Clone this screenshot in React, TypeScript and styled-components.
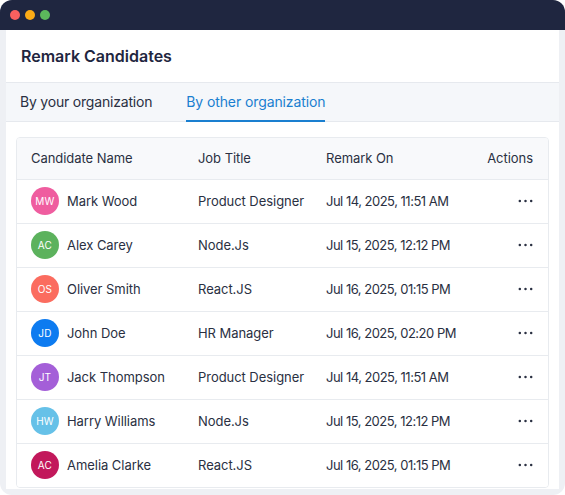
import React from 'react';
import styled, { createGlobalStyle } from 'styled-components';

const GlobalStyle = createGlobalStyle`
  html, body {
    margin: 0;
    padding: 0;
    background: #fff;
    font-family: Inter, "Liberation Sans", sans-serif;
  }
`;

const Frame = styled.div`
  width: 565px;
  height: 495px;
  box-sizing: border-box;
  display: flex;
  flex-direction: column;
  background: #eef0f4;
  border-radius: 12px;
  overflow: hidden;
`;

const TitleBar = styled.div`
  height: 30px;
  flex: none;
  display: flex;
  align-items: center;
  gap: 5px;
  padding-left: 10px;
  background: #1f2640;
`;

const Dot = styled.span<{ $color: string }>`
  width: 10px;
  height: 10px;
  border-radius: 50%;
  background: ${p => p.$color};
`;

const Panel = styled.div`
  height: 459px;
  margin: 0 6px;
  background: #fff;
  display: flex;
  flex-direction: column;
  overflow: hidden;
`;

const Title = styled.h1`
  margin: 0;
  height: 52px;
  flex: none;
  box-sizing: border-box;
  padding-left: 15px;
  display: flex;
  align-items: center;
  font-size: 16px;
  font-weight: 600;
  color: #1f2640;
`;

const Tabs = styled.div`
  height: 40px;
  flex: none;
  box-sizing: border-box;
  display: flex;
  gap: 34px;
  padding-left: 14px;
  background: #f5f7fa;
  border-top: 1px solid #e6e9ee;
  border-bottom: 1px solid #e6e9ee;
`;

const Tab = styled.div<{ $active?: boolean }>`
  display: flex;
  align-items: center;
  height: 39px;
  box-sizing: border-box;
  border-bottom: 2px solid ${p => (p.$active ? '#1a7fd0' : 'transparent')};
  font-size: 14px;
  letter-spacing: ${p => (p.$active ? '-0.1px' : '-0.2px')};
  color: ${p => (p.$active ? '#1a7fd0' : '#2a3042')};
`;

const TableCard = styled.div`
  margin: 15px 10px 0;
  border: 1px solid #e8ebef;
  border-radius: 4px;
  overflow: hidden;
`;

const Row = styled.div`
  display: grid;
  grid-template-columns: 167px 128px 145px 1fr;
  align-items: center;
  box-sizing: border-box;
  height: 44px;
  padding: 0 15px 1px 14px;
  font-size: 13px;
  letter-spacing: -0.05px;
  color: #2a3042;
  background: #fff;
  border-bottom: 1px solid #e8ebef;

  &:last-child {
    height: 43px;
    border-bottom: none;
  }
`;

const HeadRow = styled(Row)`
  height: 42px;
  background: #f8f9fb;
`;

const Person = styled.div`
  display: flex;
  align-items: center;
  gap: 8px;
`;

const Avatar = styled.span<{ $color: string }>`
  width: 28px;
  height: 28px;
  flex: none;
  border-radius: 50%;
  display: flex;
  align-items: center;
  justify-content: center;
  background: ${p => p.$color};
  color: #fff;
  font-size: 10px;
  font-weight: 400;
  letter-spacing: 0.2px;
`;

const DateCell = styled.div`
  letter-spacing: -0.5px;
  white-space: nowrap;
`;

const ActionsHead = styled.div`
  text-align: right;
`;

const ActionsCell = styled.div`
  display: flex;
  justify-content: flex-end;
`;

const MoreIcon = () => (
  <svg width="15" height="4" viewBox="0 0 15 4" fill="#2a3042">
    <circle cx="1.8" cy="2" r="1.25" />
    <circle cx="7.5" cy="2" r="1.25" />
    <circle cx="13.2" cy="2" r="1.25" />
  </svg>
);

const candidates = [
  { initials: 'MW', name: 'Mark Wood', job: 'Product Designer', date: 'Jul 14, 2025, 11:51 AM', color: '#ef5d9f' },
  { initials: 'AC', name: 'Alex Carey', job: 'Node.Js', date: 'Jul 15, 2025, 12:12 PM', color: '#5cb25d' },
  { initials: 'OS', name: 'Oliver Smith', job: 'React.JS', date: 'Jul 16, 2025, 01:15 PM', color: '#fb6c5f' },
  { initials: 'JD', name: 'John Doe', job: 'HR Manager', date: 'Jul 16, 2025, 02:20 PM', color: '#0d7bf0' },
  { initials: 'JT', name: 'Jack Thompson', job: 'Product Designer', date: 'Jul 14, 2025, 11:51 AM', color: '#a45fd8' },
  { initials: 'HW', name: 'Harry Williams', job: 'Node.Js', date: 'Jul 15, 2025, 12:12 PM', color: '#66c1e8' },
  { initials: 'AC', name: 'Amelia Clarke', job: 'React.JS', date: 'Jul 16, 2025, 01:15 PM', color: '#c2185b' },
];

export default function App() {
  return (
    <Frame>
      <GlobalStyle />
      <TitleBar>
        <Dot $color="#f9605f" />
        <Dot $color="#fbab16" />
        <Dot $color="#5cb85c" />
      </TitleBar>
      <Panel>
        <Title>Remark Candidates</Title>
        <Tabs>
          <Tab>By your organization</Tab>
          <Tab $active>By other organization</Tab>
        </Tabs>
        <TableCard>
          <HeadRow>
            <div>Candidate Name</div>
            <div>Job Title</div>
            <div>Remark On</div>
            <ActionsHead>Actions</ActionsHead>
          </HeadRow>
          {candidates.map(c => (
            <Row key={c.name}>
              <Person>
                <Avatar $color={c.color}>{c.initials}</Avatar>
                {c.name}
              </Person>
              <div>{c.job}</div>
              <DateCell>{c.date}</DateCell>
              <ActionsCell>
                <MoreIcon />
              </ActionsCell>
            </Row>
          ))}
        </TableCard>
      </Panel>
    </Frame>
  );
}
